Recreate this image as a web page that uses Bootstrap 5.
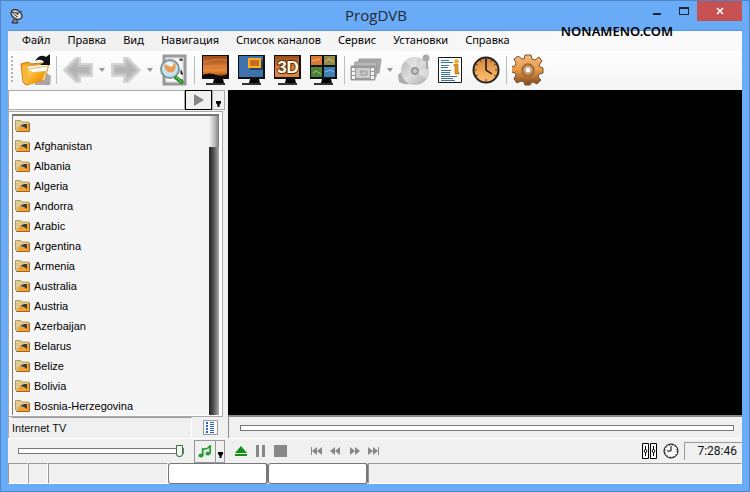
<!DOCTYPE html>
<html lang="ru">
<head>
<meta charset="utf-8">
<meta name="viewport" content="width=device-width, initial-scale=1">
<title>ProgDVB</title>
<link rel="stylesheet" href="https://cdn.jsdelivr.net/npm/bootstrap@5.3.0/dist/css/bootstrap.min.css">
<style>
body{font:11px/14px "Liberation Sans",Arial,sans-serif;color:#111;background:#6aabf7}
button{padding:0;border:0;background:none;color:inherit;font:inherit}
svg{display:block;flex:none}
.app-window{border:1px solid #4f86c6;background:#6aabf7;padding:0 7px 7px}
.title-row{height:29px;padding-left:2px}
.app-title{font:15px/20px "Open Sans","Noto Sans",sans-serif;color:#24292f;padding-top:4px}
.win-btn{width:27px;height:20px;display:flex;justify-content:center;align-items:center}
.win-close{width:45px;background:#c75050;color:#fff}
.title-side{width:124px}
.watermark{right:76px;top:21px;font:600 13px/18px "Noto Sans","Open Sans",sans-serif;color:#000;z-index:2}
.client{background:#f0f0f0;border-top:1px solid #5a95db}
.menu-row{height:20px;padding-left:14px;gap:17px;background:linear-gradient(90deg,#efefef,#fafafa 80%)}
.menu-row a{font:11px/18px "Noto Sans","Open Sans",sans-serif;color:#000;text-decoration:none;white-space:nowrap}
.tool-row{height:39px;background:linear-gradient(#fefefe,#f4f4f4)}
.grip{width:10px;height:28px;background:repeating-linear-gradient(#b4b4b4 0 2px,transparent 2px 4px) 3px 0/2px 100% no-repeat}
.tool{width:36px;height:36px;display:flex;justify-content:center;align-items:center}
.tool-sep{width:6px;height:28px;background:linear-gradient(90deg,transparent 2px,#bdbdbd 2px,#bdbdbd 3px,transparent 3px)}
.drop{width:12px;height:36px;display:flex;justify-content:center;align-items:center}
.side{width:220px;border-left:1px solid #aaa}
.search-row{height:20px;margin-right:3px}
.search-row input{min-width:0;border:1px solid #aaa;border-left:0;background:#fff;padding:0 4px;font-size:11px}
.go-btn{width:27px;border:1px solid #000;background:#f0f0f0;display:flex;justify-content:center;align-items:center}
.pick-btn{width:13px;border:1px solid #aaa;background:#f0f0f0;display:flex;justify-content:center;align-items:end;padding-bottom:2px}
.list-frame{background:#fff;border:1px solid #aaa;border-left:0;padding:2px 3px 1px 3px;margin:1px 5px 0 0}
.list-inner{border:1px solid #777;border-width:2px 0 0 1px;background:#f5f5f5}
.chan-list a{height:20px;padding-left:2px;color:#000;text-decoration:none;display:flex;align-items:center;gap:4px;font:11px/20px "Liberation Sans",Arial,sans-serif}
.scroll-track{width:10px;background:linear-gradient(90deg,#222,#4a4a4a 40%,#aaa)}
.scroll-thumb{height:31px;background:linear-gradient(90deg,#f4f4f4,#aaa 70%,#777)}
.source-row{height:21px;padding-left:3px}
.source-row>span{border-top:1px solid #999;border-right:1px solid #fff;line-height:20px}
.view-btn{width:36px;display:flex;justify-content:center;align-items:center}
.video{background:#000}
.seek-row{height:23px;border:1px solid #888;border-width:1px 0 0 1px;border-top:2px solid #888;padding:0 8px 0 11px}
.ctl-row{height:25px;border-top:1px solid #fff}
input[type=range]{appearance:none;-webkit-appearance:none;background:none;margin:0;height:14px;display:block}
input[type=range]::-webkit-slider-runnable-track{height:6px;background:#fff;border:1px solid #777}
input[type=range]::-webkit-slider-thumb{-webkit-appearance:none;width:7px;height:12px;margin-top:-4px;background:#eef8ee;border:1px solid #3a6f45;border-radius:1px 1px 4px 4px}
.seek-row input::-webkit-slider-thumb{width:1px;height:4px;margin:0;border:0;background:#fff}
.vol-wrap{width:186px;padding:0 10px}
.music-btn{width:22px;height:23px;border:1px solid #999;display:flex;justify-content:center;align-items:center}
.music-drop{width:9px;height:23px;border:1px solid #999;border-left:0;display:flex;justify-content:center;align-items:end;padding-bottom:4px}
.play-set{padding-left:10px;gap:9px}
.clock-text{width:58px;height:18px;border:1px solid #999;border-width:1px 0 0 1px;font:12px/17px Roboto,"Liberation Sans",sans-serif;text-align:right;padding-right:5px}
.status-row{height:21px}
.status-row>div{border-top:1px solid #999;border-right:1px solid #fff;border-bottom:1px solid #fff;border-left:1px solid #999}
.status-row>.cell-white{width:100px;background:#fff;border:1px solid #777;border-right-width:2px;border-radius:3px}
.w20{width:20px}.w120{width:120px}
</style>
<script src="https://cdn.jsdelivr.net/npm/bootstrap@5.3.0/dist/js/bootstrap.bundle.min.js"></script>
</head>
<body>
<svg width="0" height="0" class="position-absolute" aria-hidden="true">
<defs>
<linearGradient id="gold" x1="0" y1="0" x2="1" y2="1"><stop offset="0" stop-color="#ffd968"/><stop offset=".5" stop-color="#f9a61c"/><stop offset="1" stop-color="#df7d08"/></linearGradient>
<linearGradient id="dusk" x1="0" y1="0" x2="0" y2="1"><stop offset="0" stop-color="#9d4c1f"/><stop offset=".7" stop-color="#e88a3c"/><stop offset=".85" stop-color="#c06a22"/><stop offset="1" stop-color="#251005"/></linearGradient>
<linearGradient id="bronze" x1="0" y1="0" x2="0" y2="1"><stop offset="0" stop-color="#f6b878"/><stop offset=".5" stop-color="#e79a4a"/><stop offset="1" stop-color="#82441a"/></linearGradient>
<linearGradient id="face" x1="0" y1="0" x2="0" y2="1"><stop offset="0" stop-color="#c98245"/><stop offset=".6" stop-color="#f4ab55"/><stop offset="1" stop-color="#f8c27a"/></linearGradient>
<linearGradient id="silver" x1="0" y1="0" x2="1" y2="1"><stop offset="0" stop-color="#b4b4b4"/><stop offset=".5" stop-color="#ddd"/><stop offset="1" stop-color="#a8a8a8"/></linearGradient>
<symbol id="folder" viewBox="0 0 15 13"><path d="M.5 11V1.500h5l1 1.500h7V11z" fill="#dfcb8c" stroke="#b39a58"/><path d="M3 5h11v7H3z" fill="#f9a02a"/><path d="M3 5h9v3H3z" fill="#d5c6a0"/><path d="M1 12.500h13.500V4" fill="none" stroke="#8d6a35"/><path d="M5 7l4-2h3v5L9 8z" fill="#3c3c3c"/></symbol>
<symbol id="stand" viewBox="0 0 28 32"><path d="M0 1h27v24H0z" fill="#111"/><path d="M12 25h9l1 4H11z" fill="#000"/><path d="M4 30h19" stroke="#333" stroke-width="2"/></symbol>
<symbol id="tri" viewBox="0 0 5 6"><path d="M0 0h5v2L3.500 4v2h-2V4L0 2z" fill="#000"/></symbol>
</defs></svg>

<div class="app-window d-flex flex-column vh-100 position-relative overflow-hidden">
<header class="title-row d-flex">
  <div class="title-side pt-2"><svg width="14" height="15" viewBox="0 0 14 15"><path d="M4 10l-2 4h6l-2-4" fill="#888" stroke="#222"/><ellipse cx="6.500" cy="5.500" rx="6" ry="4.200" transform="rotate(38 6.500 5.500)" fill="#ddd" stroke="#333" stroke-width="1.300"/><path d="M2 3l6 1-1 4zM7 5l5-3" fill="#777" stroke="#444"/><path d="M4 4l4 3" stroke="#fff"/></svg></div>
  <div class="app-title flex-fill text-center">ProgDVB</div>
  <div class="d-flex title-side align-items-start justify-content-end">
    <button class="win-btn" aria-label="Свернуть"><svg width="8" height="8"><path d="M0 6h8v2H0z" fill="#1b2430"/></svg></button>
    <button class="win-btn" aria-label="Развернуть"><svg width="10" height="8"><path d="M0 0h10v8H0zM1 2v5h8V2z" fill="#1b2430" fill-rule="evenodd"/></svg></button>
    <button class="win-btn win-close" aria-label="Закрыть"><svg width="8" height="8"><path d="M1 1l6 6M7 1L1 7" stroke="#fff" stroke-width="1.700"/></svg></button>
  </div>
</header>
<div class="watermark position-absolute">NONAMENO.COM</div>

<div class="client d-flex flex-column flex-fill overflow-hidden">
<nav class="menu-row d-flex flex-shrink-0" aria-label="Меню">
<a href="#">Файл</a><a href="#">Правка</a><a href="#">Вид</a><a href="#">Навигация</a><a href="#">Список каналов</a><a href="#">Сервис</a><a href="#">Установки</a><a href="#">Справка</a>
</nav>

<div class="tool-row d-flex align-items-center flex-shrink-0" role="toolbar" aria-label="Инструменты">
<span class="grip"></span>
<button class="tool" aria-label="Открыть"><svg width="32" height="32" viewBox="0 0 32 32"><path d="M14 31h16l1-9-6-4z" fill="#888" opacity=".7"/><path d="M1 10l7-2 3 2 11-1 4 3-2 14-18 5-3-3z" fill="#f4a21f" stroke="#c9780f"/><path d="M7 12l22-2-4 15-14 4z" fill="#fffaf0" stroke="#d9a44c"/><path d="M9 15l19-3-4 14-12 3z" fill="#fff" stroke="#e0b468"/><path d="M2 12l5-1 4 18-5 1-3-3z" fill="#f9b83c"/><path d="M8 15l5 3 13-1-4 10-14 4z" fill="url(#gold)"/><path d="M15 7q5-8 11-4l4-3v11H20l4-3q-3-4-9-1z" fill="#111"/></svg></button>
<span class="tool-sep"></span>
<button class="tool" aria-label="Назад"><svg width="30" height="26" viewBox="0 0 30 26"><path d="M1 13L13 1h4v6h12v12H17v6h-4z" fill="#c3c3c3" stroke="#d5d5d5" stroke-width="2"/><path d="M5 13l9-8v5h12v6H14v5z" fill="#b4b4b4"/></svg></button>
<button class="drop" aria-label="История назад"><svg width="6" height="4"><path d="M0 0h6L3 4z" fill="#999"/></svg></button>
<button class="tool" aria-label="Вперёд"><svg width="30" height="26" viewBox="0 0 30 26"><g transform="matrix(-1 0 0 1 30 0)"><path d="M1 13L13 1h4v6h12v12H17v6h-4z" fill="#c3c3c3" stroke="#d5d5d5" stroke-width="2"/><path d="M5 13l9-8v5h12v6H14v5z" fill="#b4b4b4"/></g></svg></button>
<button class="drop" aria-label="История вперёд"><svg width="6" height="4"><path d="M0 0h6L3 4z" fill="#999"/></svg></button>
<button class="tool" aria-label="Поиск"><svg width="30" height="34" viewBox="0 0 30 34"><path d="M5 3h21v28H5z" fill="#eee" stroke="#999" stroke-width="3"/><path d="M7 5h17v24H7z" fill="#fafafa" stroke="#ccc"/><path d="M20 7h4M22 5v3M20 27h4M22 17v4h2" stroke="#222"/><circle cx="11" cy="16" r="9" fill="#c7e1ea" stroke="#7d959c" stroke-width="2"/><path d="M5 12q2 9 9 7 4-3 2-9-3 0-4 5-3-4-7-3z" fill="#ed9c50"/><path d="M8 10l6 2" stroke="#fff" stroke-width="3" opacity=".8"/><path d="M16 24l8 6" stroke="#248c24" stroke-width="4"/><path d="M17 24l6 5" stroke="#75d861"/></svg></button>
<span class="tool-sep"></span>
<button class="tool" aria-label="Полный экран"><svg width="28" height="32" viewBox="0 0 28 32"><use href="#stand"/><path d="M1 2h24v21H1z" fill="url(#dusk)"/><path d="M1 8q12-4 24-2M1 13q12-2 24-1" stroke="#f3a052" fill="none" opacity=".5"/><path d="M1 21q7-3 13 0t11-1v3H1z" fill="#110804"/></svg></button>
<button class="tool" aria-label="Картинка в картинке"><svg width="28" height="32" viewBox="0 0 28 32"><use href="#stand"/><path d="M1 2h24v21H1z" fill="#3e72ad"/><path d="M12 6h13v10H12z" fill="#224471"/><path d="M10 4h13v10H10z" fill="#ffae18"/><path d="M12 6h9v6h-9z" fill="#c9692b"/></svg></button>
<button class="tool" aria-label="3D"><svg width="28" height="32" viewBox="0 0 28 32"><use href="#stand"/><path d="M1 2h24v21H1z" fill="url(#dusk)"/><path d="M1 16h24v7H1z" fill="#d78645"/><text x="14" y="19" text-anchor="middle" font-family="Liberation Sans, Arial, sans-serif" font-size="17" font-weight="bold" fill="#fffce0" stroke="#5b2c0c" stroke-width="2" paint-order="stroke">3D</text></svg></button>
<button class="tool" aria-label="Мозаика"><svg width="28" height="32" viewBox="0 0 28 32"><use href="#stand"/><path d="M1 2h11v9H1z" fill="#d97b37"/><path d="M14 2h11v9H14z" fill="#8d8c4c"/><path d="M1 13h11v10H1z" fill="#4c8139"/><path d="M14 13h11v10H14z" fill="#3f80b8"/><path d="M2 7l8-2M15 8l4-3 5 3" stroke="#e9b978" fill="none"/><path d="M3 19l3-2 5 3" stroke="#9dcb76" fill="none"/><path d="M15 18l5-2 4 2" stroke="#8dbbe0" fill="none"/></svg></button>
<span class="tool-sep"></span>
<button class="tool" aria-label="Запись"><svg width="32" height="24" viewBox="0 0 32 24"><path d="M9 1h22l-2 14H7z" fill="#aaa" stroke="#999"/><path d="M5 4h22l-1 15H3z" fill="#b8b8b8" stroke="#999"/><path d="M1 8h24v14H1z" fill="#999" stroke="#999"/><path d="M6 10h14v10H6z" fill="#ccc"/><path d="M2 10h3v3H2zM2 14h3v3H2zM2 18h3v3H2zM21 10h3v3h-3zM21 14h3v3h-3zM21 18h3v3h-3z" fill="#f5f5f5"/><path d="M10 13h7v4h-6v-3h3" fill="none" stroke="#999"/></svg></button>
<button class="drop" aria-label="Варианты записи"><svg width="6" height="4"><path d="M0 0h6L3 4z" fill="#999"/></svg></button>
<button class="tool" aria-label="Диск"><svg width="34" height="32" viewBox="0 0 34 32"><path d="M1 21q5-6 8-1l8 9q-8 3-15-1z" fill="#aaa"/><circle cx="18" cy="17" r="14" fill="url(#silver)"/><path d="M18 17L8 7q7-5 13-3zM18 17l11 8q4-7 2-11z" fill="#f0f0f0" opacity=".5"/><circle cx="18" cy="17" r="4" fill="#999"/><circle cx="18" cy="17" r="2" fill="#ccc"/><circle cx="29" cy="4" r="3.500" fill="#aaa"/><path d="M30 7v8" stroke="#aaa" stroke-width="2"/></svg></button>
<button class="tool" aria-label="Информация"><svg width="24" height="28" viewBox="0 0 24 28"><path d="M.5 1.500h23v25H.5z" fill="#fffdf3" stroke="#181818"/><path d="M3 4.500h8M3 6.500h12M3 9.500h8M3 11.500h7M3 14.500h10M3 16.500h9M3 18.500h9M3 20.500h16M3 22.500h12M3 24.500h14" stroke="#3976a6"/><circle cx="18.500" cy="5.500" r="2.300" fill="#f5a527"/><path d="M16 8.500h4V16h1v2h-4v-8h-1z" fill="#e9971d" stroke="#8b5a18" stroke-width=".5"/></svg></button>
<button class="tool" aria-label="Планировщик"><svg width="28" height="28" viewBox="0 0 28 28"><circle cx="14" cy="14" r="12.500" fill="url(#face)" stroke="#222" stroke-width="2"/><path d="M14 2v3M14 23v3M2 14h3M23 14h3M8 4l1 2M20 4l-1 2M4 8l2 1M24 8l-2 1M4 20l2-1M24 20l-2-1" stroke="#69401c"/><path d="M14 3v11l6 4" fill="none" stroke="#111" stroke-width="1.500"/></svg></button>
<span class="tool-sep"></span>
<button class="tool" aria-label="Настройки"><svg width="32" height="32" viewBox="0 0 32 32"><path d="M12 5l1-4h6l1 4 3 1 4-3 3 4-3 4 1 2 3 1v5l-4 1-1 3 3 3-4 4-4-2-2 1-1 2h-5l-1-3-3-1-4 2-3-4 2-4-1-2-4-1v-5l4-1 1-3-2-4 4-3 4 3z" fill="url(#bronze)" stroke="#735237"/><circle cx="16" cy="16" r="6" fill="#d58a3e" stroke="#8f6543" stroke-width="1.500"/><circle cx="16" cy="16" r="3" fill="#fff" stroke="#aaa"/></svg></button>
</div>

<main class="d-flex flex-fill overflow-hidden">
<aside class="side d-flex flex-column flex-shrink-0">
  <div class="search-row d-flex">
    <input type="text" class="flex-fill" aria-label="Поиск канала">
    <button class="go-btn" aria-label="Найти"><svg width="10" height="12"><path d="M0 0l10 6-10 6z" fill="#858585"/></svg></button>
    <button class="pick-btn" aria-label="Список"><svg width="5" height="6"><use href="#tri"/></svg></button>
  </div>
  <div class="list-frame flex-fill overflow-hidden d-flex">
    <div class="list-inner d-flex flex-fill overflow-hidden">
      <ul class="chan-list list-unstyled mb-0 flex-fill">
        <li><a href="#" aria-label="Все"><svg width="15" height="13"><use href="#folder"/></svg></a></li>
        <li><a href="#"><svg width="15" height="13"><use href="#folder"/></svg>Afghanistan</a></li>
        <li><a href="#"><svg width="15" height="13"><use href="#folder"/></svg>Albania</a></li>
        <li><a href="#"><svg width="15" height="13"><use href="#folder"/></svg>Algeria</a></li>
        <li><a href="#"><svg width="15" height="13"><use href="#folder"/></svg>Andorra</a></li>
        <li><a href="#"><svg width="15" height="13"><use href="#folder"/></svg>Arabic</a></li>
        <li><a href="#"><svg width="15" height="13"><use href="#folder"/></svg>Argentina</a></li>
        <li><a href="#"><svg width="15" height="13"><use href="#folder"/></svg>Armenia</a></li>
        <li><a href="#"><svg width="15" height="13"><use href="#folder"/></svg>Australia</a></li>
        <li><a href="#"><svg width="15" height="13"><use href="#folder"/></svg>Austria</a></li>
        <li><a href="#"><svg width="15" height="13"><use href="#folder"/></svg>Azerbaijan</a></li>
        <li><a href="#"><svg width="15" height="13"><use href="#folder"/></svg>Belarus</a></li>
        <li><a href="#"><svg width="15" height="13"><use href="#folder"/></svg>Belize</a></li>
        <li><a href="#"><svg width="15" height="13"><use href="#folder"/></svg>Bolivia</a></li>
        <li><a href="#"><svg width="15" height="13"><use href="#folder"/></svg>Bosnia-Herzegovina</a></li>
      </ul>
      <div class="scroll-track"><div class="scroll-thumb"></div></div>
    </div>
  </div>
  <div class="source-row d-flex flex-shrink-0">
    <span class="flex-fill">Internet TV</span>
    <button class="view-btn" aria-label="Вид списка"><svg width="15" height="15"><path d="M.5.5h14v14H.5z" fill="#fafafa" stroke="#999"/><path d="M4 2v11" stroke="#2862c4" stroke-width="2" stroke-dasharray="2 1"/><path d="M7 2.500h4M7 4.500h4M7 6.500h4M7 8.500h4M7 10.500h4M7 12.500h4" stroke="#2862c4"/></svg></button>
  </div>
</aside>
<section class="d-flex flex-column flex-fill">
  <div class="video flex-fill"></div>
  <div class="seek-row d-flex align-items-center flex-shrink-0"><input type="range" class="w-100" min="0" max="100" value="0" aria-label="Позиция"></div>
</section>
</main>

<footer class="flex-shrink-0">
<div class="ctl-row d-flex align-items-center">
  <div class="vol-wrap d-flex align-items-center"><input type="range" class="w-100" min="0" max="100" value="100" aria-label="Громкость"></div>
  <button class="music-btn" aria-label="Звук"><svg width="14" height="13" viewBox="0 0 14 13"><ellipse cx="3" cy="10.500" rx="2.500" ry="2" fill="#259b35"/><ellipse cx="10" cy="8.500" rx="2.500" ry="2" fill="#259b35"/><path d="M4.700 10.500V4q4 1 7.500-3v7.500" fill="none" stroke="#259b35" stroke-width="1.800"/></svg></button>
  <button class="music-drop" aria-label="Звуковая дорожка"><svg width="5" height="6"><use href="#tri"/></svg></button>
  <div class="play-set d-flex align-items-center">
  <button aria-label="Открыть файл"><svg width="12" height="11"><path d="M6 0l6 7H0zM0 8h12v2H0z" fill="#109018"/></svg></button>
  <button aria-label="Пауза"><svg width="9" height="12"><path d="M0 0h3v12H0zM6 0h3v12H6z" fill="#888"/></svg></button>
  <button aria-label="Стоп"><svg width="13" height="12"><path d="M0 0h13v12H0z" fill="#888"/></svg></button>
  </div>
  <div class="d-flex gap-2 ms-4">
  <button aria-label="Предыдущий"><svg width="11" height="8"><path d="M0 0h1v8H0zM6 0v8L1 4zM11 0v8L6 4z" fill="#888"/></svg></button>
  <button aria-label="Перемотка назад"><svg width="11" height="8"><path d="M5 0v8L0 4zM10 0v8L5 4z" fill="#888"/></svg></button>
  <button aria-label="Перемотка вперёд"><svg width="11" height="8"><path d="M1 0v8l5-4zM6 0v8l5-4z" fill="#888"/></svg></button>
  <button aria-label="Следующий"><svg width="11" height="8"><path d="M0 0v8l5-4zM5 0v8l5-4zM10 0h1v8h-1z" fill="#888"/></svg></button>
  </div>
  <button class="ms-auto" aria-label="Эквалайзер"><svg width="16" height="16"><path d="M.5.5h6v15h-6zM8.500.5h6v15h-6z" fill="#fafafa" stroke="#000"/><path d="M3.500 3v10M11.500 3v10" stroke="#000"/><path d="M3.500 6L5 8l-1.500 2L2 8zM11.500 6L13 8l-1.500 2L10 8z" fill="#fff" stroke="#000"/></svg></button>
  <button class="ms-1 me-1" aria-label="Таймер"><svg width="18" height="16" viewBox="0 0 18 16"><circle cx="9" cy="8" r="7" fill="#fafafa" stroke="#000"/><circle cx="9" cy="8" r="6" fill="none" stroke="#000" stroke-dasharray="1 2.140"/><path d="M9 3v5H5" fill="none" stroke="#000"/></svg></button>
  <div class="clock-text">7:28:46</div>
</div>
<div class="status-row d-flex"><div class="w20"></div><div class="w20"></div><div class="w120"></div><div class="cell-white"></div><div class="cell-white"></div><div class="flex-fill"></div></div>
</footer>
</div>
</div>
</body>
</html>
